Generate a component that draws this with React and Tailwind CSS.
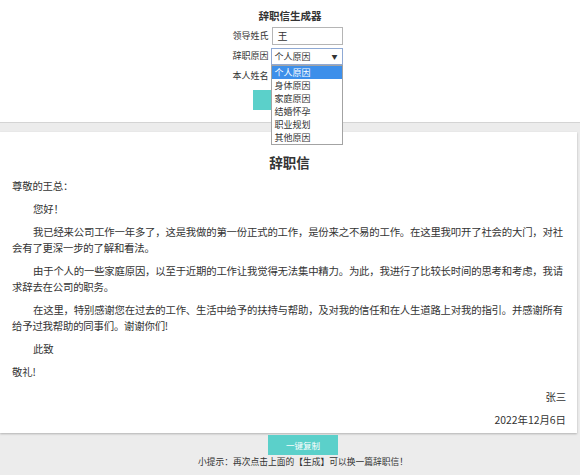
import React from 'react';

const reasons = ['个人原因', '身体原因', '家庭原因', '结婚怀孕', '职业规划', '其他原因'];

function Row({ label, children }) {
  return (
    <div className="flex items-center h-[20px]">
      <span className="w-[38px] text-[9px] leading-[12px] text-[#333] whitespace-nowrap">{label}</span>
      <div className="relative ml-[1px]">{children}</div>
    </div>
  );
}

export default function App() {
  return (
    <div
      className="w-[580px] h-[475px] overflow-hidden bg-[#ececec] text-[#333]"
      style={{ fontFamily: '"Noto Sans CJK SC", "Noto Sans", sans-serif' }}
    >
      {/* Generator form */}
      <div className="bg-white border-b border-[#d4d4d4] h-[123px] pt-[8px]">
        <h1 className="text-center text-[10.5px] leading-[16px] font-bold">辞职信生成器</h1>
        <div className="flex justify-center pr-[5px] mt-[2px]">
          <div className="w-[110px] flex flex-col">
            <Row label="领导姓氏">
              <div className="w-[71px] h-[18px] border border-[#b5b5b5] bg-white text-[10px] leading-[16px] pl-[5px]">王</div>
            </Row>
            <Row label="辞职原因">
              <div className="w-[72px] h-[17px] border border-[#8fa9d4] bg-white text-[9px] leading-[15px] pl-[3px] flex items-center justify-between pr-[4px]">
                <span>个人原因</span>
                <span className="text-[6px] leading-[15px]">▼</span>
              </div>
              <div className="absolute left-0 top-[17px] w-[72px] border border-[#a3a3a3] bg-white z-10">
                {reasons.map((r, i) => (
                  <div
                    key={r}
                    className={
                      'h-[13px] text-[9px] leading-[13px] pl-[3px] ' +
                      (i === 0 ? 'bg-[#3d8fea] text-white' : 'text-[#333]')
                    }
                  >
                    {r}
                  </div>
                ))}
              </div>
            </Row>
            <Row label="本人姓名">
              <div className="w-[71px] h-[18px] border border-[#b5b5b5] bg-white"></div>
            </Row>
          </div>
        </div>
        <div className="flex justify-center mt-[4px]">
          <button className="w-[74px] h-[20px] bg-[#5bd0ca]"></button>
        </div>
      </div>

      {/* Letter */}
      <div className="w-[577px] mt-[9px] bg-white shadow-[0_1px_2px_rgba(0,0,0,0.25)] pt-[20px] pb-[5px] pl-[12px] pr-[10px] text-[10.4px] leading-[16px] tracking-[-0.2px]">
        <h2 className="text-center text-[13.5px] leading-[20px] font-bold mb-[6px] tracking-normal">辞职信</h2>
        <div className="flex flex-col gap-[7px]">
          <p>尊敬的王总：</p>
          <p className="indent-[21px]">您好！</p>
          <p className="indent-[21px]">
            我已经来公司工作一年多了，这是我做的第一份正式的工作，是份来之不易的工作。在这里我叩开了社会的大门，对社会有了更深一步的了解和看法。
          </p>
          <p className="indent-[21px]">
            由于个人的一些家庭原因，以至于近期的工作让我觉得无法集中精力。为此，我进行了比较长时间的思考和考虑，我请求辞去在公司的职务。
          </p>
          <p className="indent-[21px]">
            在这里，特别感谢您在过去的工作、生活中给予的扶持与帮助，及对我的信任和在人生道路上对我的指引。并感谢所有给予过我帮助的同事们。谢谢你们!
          </p>
          <p className="indent-[21px]">此致</p>
          <p>敬礼!</p>
          <p className="text-right mt-[2px] pr-[1px]">张三</p>
          <p className="text-right pr-[1px] tracking-normal">2022年12月6日</p>
        </div>
      </div>

      {/* Footer */}
      <div className="flex flex-col items-center pl-[26px]">
        <button className="mt-[2px] w-[70px] h-[20px] bg-[#5bd0ca] text-white text-[8.5px] leading-[20px]">一键复制</button>
        <p className="mt-[1px] text-[8.75px] leading-[12px] text-[#333]">小提示：再次点击上面的【生成】可以换一篇辞职信！</p>
      </div>
    </div>
  );
}
